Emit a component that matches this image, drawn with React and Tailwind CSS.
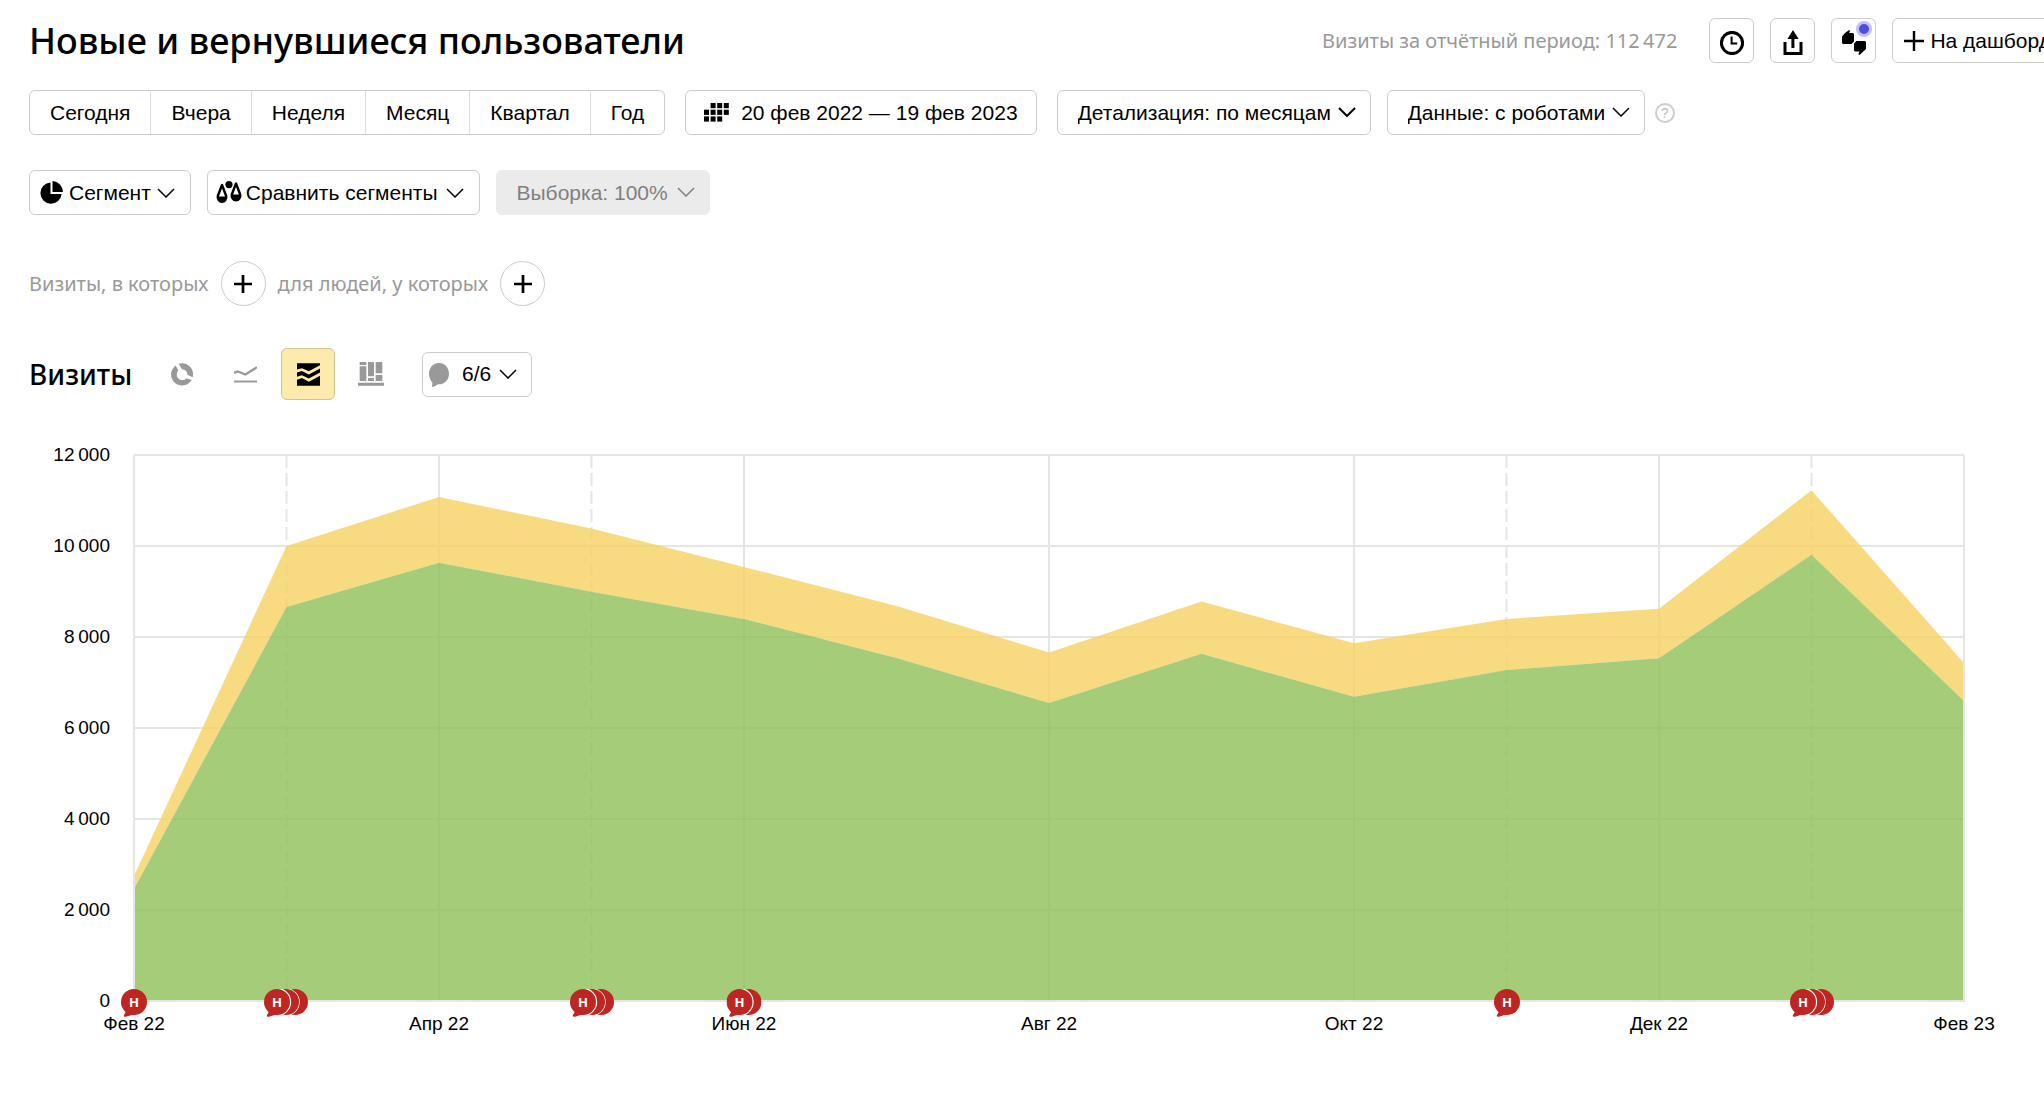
import React from "react";

const MONTHS = ["Фев 22", "", "Апр 22", "", "Июн 22", "", "Авг 22", "", "Окт 22", "", "Дек 22", "", "Фев 23"];
const TOTAL = [2747, 10000, 11077, 10382, 9538, 8681, 7659, 8778, 7862, 8396, 8620, 11224, 7427];
const NEW_USERS = [2461, 8659, 9633, 8993, 8396, 7538, 6549, 7631, 6686, 7275, 7532, 9809, 6593];
const Y_LABELS = ["12\u2009000", "10\u2009000", "8\u2009000", "6\u2009000", "4\u2009000", "2\u2009000", "0"];
const NOTES = [
  { month: 0, count: 1 },
  { month: 1, count: 3 },
  { month: 3, count: 3 },
  { month: 4, count: 2 },
  { month: 9, count: 1 },
  { month: 11, count: 3 },
];
const MAX = 12000;
const LAST = MONTHS.length - 1;

const point = (v, i) => `${i},${MAX - v}`;

function Chevron({ className = "", stroke = 1.5 }) {
  return (
    <svg viewBox="0 0 18 10" width="18" height="10" fill="none" stroke="currentColor" strokeWidth={stroke} className={className} aria-hidden="true">
      <path d="M1 1l8 8 8-8" />
    </svg>
  );
}

function Dropdown({ label, text, icon, pad = "pl-5 pr-[38px]", heavy = false, disabled = false }) {
  return (
    <div className={disabled ? "relative shrink-0 text-[#808080]" : "relative shrink-0 text-black"}>
      <select
        aria-label={label}
        disabled={disabled}
        className={
          "h-[45px] appearance-none rounded-md border text-[21px] leading-6 opacity-100 " +
          pad +
          (disabled ? " border-[#ebebeb] bg-[#ebebeb]" : " border-[#ccc] bg-white")
        }
      >
        <option>{text}</option>
      </select>
      {icon}
      <Chevron stroke={heavy ? 2 : 1.5} className="pointer-events-none absolute top-[17px] right-[15px]" />
    </div>
  );
}

function ClockIcon() {
  return (
    <svg viewBox="0 0 24 24" width="24" height="24" fill="none" stroke="currentColor" aria-hidden="true">
      <circle cx="12" cy="12" r="10.6" strokeWidth="3" />
      <path d="M11.6 5.5v7.1h5.6" strokeWidth="2" />
    </svg>
  );
}

function ShareIcon() {
  return (
    <svg viewBox="0 0 20 26" width="20" height="26" aria-hidden="true">
      <path d="M2 12v11.5h16V12" fill="none" stroke="currentColor" strokeWidth="3" />
      <path d="M10 0l5.6 9H11.4v9H8.4V9H4.4z" fill="currentColor" />
    </svg>
  );
}

function QuotesIcon() {
  return (
    <svg viewBox="0 0 24 25" width="24" height="25" fill="currentColor" aria-hidden="true">
      <path d="M7.2 0L8 .8 7.2 3H11l1 1v7.500l-2.500 2.500H1L0 13V6.500L3 3z" />
      <path d="M14.500 11H23l1 1v7l-6.500 6-1.100-.8L17.500 21.500H13L12 20.500V13.500z" />
    </svg>
  );
}

function PlusIcon({ size, thick }) {
  return (
    <svg viewBox="0 0 20 20" width={size} height={size} stroke="currentColor" strokeWidth={thick} aria-hidden="true">
      <path d="M10 0v20M0 10h20" />
    </svg>
  );
}

function CalendarIcon() {
  const cells = [[1, 0], [2, 0], [3, 0], [0, 1], [1, 1], [2, 1], [3, 1], [0, 2], [1, 2], [2, 2]];
  return (
    <svg viewBox="0 0 25 19" width="25" height="19" fill="currentColor" aria-hidden="true">
      {cells.map(([c, r]) => (
        <rect key={`${c}-${r}`} x={c * 6.6} y={r * 6.7} width="5" height="5.2" />
      ))}
    </svg>
  );
}

function PieIcon() {
  return (
    <svg viewBox="0 0 23 23" width="23" height="23" fill="currentColor" aria-hidden="true">
      <path d="M10.500 1.500A10.600 10.600 0 1 0 21.600 13H10.500z" />
      <path d="M12.500 0v11H23A11 11 0 0 0 12.500 0z" />
    </svg>
  );
}

function ScalesIcon() {
  return (
    <svg viewBox="0 0 26 23" width="26" height="23" aria-hidden="true">
      <circle cx="13" cy="3.600" r="3.600" fill="currentColor" />
      <path d="M6 4L1.800 15a4.300 4.800 0 1 0 8.400 0z" fill="none" stroke="currentColor" strokeWidth="2.400" strokeLinejoin="round" />
      <path d="M1 15.500h10a5 5 0 1 1-10 0z" fill="currentColor" />
      <path d="M20 2.500L15.800 13.500a4.300 4.800 0 1 0 8.400 0z" fill="none" stroke="currentColor" strokeWidth="2.400" strokeLinejoin="round" />
      <path d="M15 13.500h10a5 5 0 1 1-10 0z" fill="currentColor" />
    </svg>
  );
}

function DonutIcon() {
  return (
    <svg viewBox="0 0 66 68" width="22" height="23" fill="currentColor" aria-hidden="true">
      <path d="M23 2A33 33 0 0 1 65 42L49 35A16 16 0 0 0 33 18z" />
      <path d="M14 7L22 22A16 16 0 0 0 46 46L62 50A33 33 0 1 1 14 7z" />
    </svg>
  );
}

function LineIcon() {
  return (
    <svg viewBox="0 0 69 50" width="23" height="17" fill="none" stroke="currentColor" aria-hidden="true">
      <path d="M0 20l12-4 22 9L69 3" strokeWidth="7" />
      <path d="M0 46h69" strokeWidth="6" />
    </svg>
  );
}

function AreaIcon() {
  return (
    <svg viewBox="0 0 70 68" width="23" height="23" fill="currentColor" aria-hidden="true">
      <path d="M0 0H70V6L36 24L15 15L0 19z" />
      <path d="M0 28L15 23L36 34L70 16V28L36 46L15 36L0 41z" />
      <path d="M0 50L15 45L36 56L70 38V68H0z" />
    </svg>
  );
}

function ColumnsIcon() {
  return (
    <svg viewBox="0 0 78 72" width="26" height="24" fill="currentColor" aria-hidden="true">
      <path d="M5 0H25V9H5zM5 13H25V57H5zM30 0H48V43H30zM30 48H48V57H30zM53 0H73V34H53zM53 39H73V57H53zM0 62H78V71H0z" />
    </svg>
  );
}

function ChatIcon() {
  return (
    <svg viewBox="0 0 60 72" width="20" height="24" fill="#999" className="pointer-events-none absolute top-[11px] left-[7px]" aria-hidden="true">
      <path d="M30 0C47 0 60 14 60 32S47 64 30 64Q26 64 23 66Q16 72 8 72Q11 66 10 58Q0 47 0 32C0 14 13 0 30 0z" />
    </svg>
  );
}

function NoteMarker({ month, count }) {
  const width = 26 + (count - 1) * 9;
  const extra = Array.from({ length: count - 1 }, (_, i) => count - 1 - i);
  return (
    <button
      type="button"
      aria-label={`Примечания: ${count}`}
      className="absolute top-full -mt-3 -translate-x-1/2"
      style={{ left: `${(month / LAST) * 100}%` }}
    >
      <svg viewBox={`0 0 ${width} 28`} width={width} height="28" className="block">
        {extra.map((n) => (
          <g key={n}>
            <circle cx={13 + n * 9} cy="13" r="13" fill="#bd2622" />
            <path d={`M${15 + (n - 1) * 9} 0a13.500 13.200 0 0 1 0 26`} fill="none" stroke="#fff" strokeWidth={n === 1 ? 2 : 1.2} />
          </g>
        ))}
        <circle cx="13" cy="13" r="13" fill="#bd2622" />
        <path d="M6 20Q5 23 3 26Q2 28 5 27.800Q10 27 14 24z" fill="#bd2622" />
        <text x="13" y="18" textAnchor="middle" fill="#fff" fontSize="13" fontWeight="700" fontFamily="Noto Sans, sans-serif">Н</text>
      </svg>
    </button>
  );
}

function VisitsChart() {
  const newLine = NEW_USERS.map(point);
  const totalLine = TOTAL.map(point);
  const dashed = [1, 3, 9, 11];
  return (
    <div className="mr-20 flex items-start pl-4">
      <div className="-mt-3 flex h-[570px] w-[65px] flex-col justify-between text-right text-[19px] leading-6">
        {Y_LABELS.map((t) => (
          <span key={t}>{t}</span>
        ))}
      </div>
      <div className="ml-6 min-w-0 flex-1">
        <div className="relative h-[546px]">
          <svg viewBox={`0 0 ${LAST} ${MAX}`} preserveAspectRatio="none" className="block h-full w-full overflow-visible" role="img" aria-label="Визиты по месяцам">
            <g stroke="#e5e5e5" strokeWidth="2" fill="none">
              {[0, 2000, 4000, 6000, 8000, 10000, 12000].map((v) => (
                <path key={v} d={`M0 ${v}H${LAST}`} vectorEffect="non-scaling-stroke" />
              ))}
              {[0, 2, 4, 6, 8, 10, 12].map((m) => (
                <path key={m} d={`M${m} 0V${MAX}`} vectorEffect="non-scaling-stroke" />
              ))}
              {dashed.map((m) => (
                <path key={m} d={`M${m} 0V${MAX}`} strokeDasharray="13 5" vectorEffect="non-scaling-stroke" />
              ))}
            </g>
            <polygon points={[...totalLine, ...[...newLine].reverse()].join(" ")} fill="#f6d162" fillOpacity="0.8" />
            <polygon points={[`0,${MAX}`, ...newLine, `${LAST},${MAX}`].join(" ")} fill="#8fbf56" fillOpacity="0.8" />
            <path d={`M0 0V${MAX}H${LAST}V0`} fill="none" stroke="#e5e5e5" strokeWidth="2" vectorEffect="non-scaling-stroke" />
          </svg>
          {NOTES.map((n) => (
            <NoteMarker key={n.month} {...n} />
          ))}
        </div>
        <div className="mt-[11px] flex justify-between text-[19px] leading-6">
          {MONTHS.map((m, i) => (
            <span key={i} className="flex w-0 justify-center whitespace-nowrap">{m}</span>
          ))}
        </div>
      </div>
    </div>
  );
}

const iconButton = "relative flex h-[45px] w-[45px] shrink-0 items-center justify-center rounded-md border border-[#ccc] pt-1";
const textButton = "flex h-[45px] shrink-0 items-center rounded-md border border-[#ccc] bg-white text-[21px] leading-6 whitespace-nowrap";

export default function App() {
  return (
    <main className="min-h-screen overflow-hidden bg-white pt-[18px] pl-[29px] font-['Liberation_Sans',Arial,sans-serif] text-black">
      <header className="-mr-7 flex h-[45px] items-center justify-between">
        <h1 className="font-['Noto_Sans',sans-serif] text-4xl leading-[48px] font-medium whitespace-nowrap">Новые и вернувшиеся пользователи</h1>
        <div className="flex shrink-0 items-center gap-4">
          <p className="mr-4 font-['Noto_Sans',sans-serif] text-xl leading-6 whitespace-nowrap text-[#999]">
            Визиты за отчётный период: 112&#8201;472
          </p>
          <button type="button" aria-label="История" className={iconButton}><ClockIcon /></button>
          <button type="button" aria-label="Экспорт" className={iconButton}><ShareIcon /></button>
          <button type="button" aria-label="Отзывы" className={iconButton}>
            <QuotesIcon />
            <span className="absolute top-[2px] right-[3px] h-4 w-4 rounded-full border-[3px] border-[#c3c0f9] bg-[#524edb]" />
          </button>
          <button type="button" className={textButton + " gap-1.5 pr-5 pl-[11px]"}>
            <PlusIcon size={20} thick={2.4} />
            На дашборд
          </button>
        </div>
      </header>

      <div className="mt-[27px] flex items-center">
        <div className="flex shrink-0 divide-x divide-[#ddd] overflow-hidden rounded-md border border-[#ccc] text-[21px] leading-6">
          {["Сегодня", "Вчера", "Неделя", "Месяц", "Квартал", "Год"].map((p) => (
            <button key={p} type="button" className="h-[43px] px-5">{p}</button>
          ))}
        </div>
        <button type="button" className={textButton + " ml-5 gap-3 px-[18px]"}>
          <CalendarIcon />
          20 фев 2022 — 19 фев 2023
        </button>
        <div className="ml-5 flex items-center gap-4">
          <Dropdown label="Детализация" text="Детализация: по месяцам" heavy />
          <Dropdown label="Данные" text="Данные: с роботами" />
        </div>
        <button type="button" aria-label="Справка" className="ml-2.5 flex h-5 w-5 items-center justify-center rounded-full border-2 border-[#ccc] text-sm leading-4 text-[#bbb]">?</button>
      </div>

      <div className="mt-[35px] flex items-center gap-4">
        <button type="button" className={textButton + " gap-1.5 pr-[15px] pl-[10px]"}>
          <PieIcon />
          Сегмент
          <Chevron />
        </button>
        <button type="button" className={textButton + " gap-1 pr-[15px] pl-2"}>
          <ScalesIcon />
          Сравнить сегменты
          <Chevron className="ml-1" />
        </button>
        <Dropdown label="Выборка" text="Выборка: 100%" pad="pl-5 pr-10" disabled />
      </div>

      <div className="mt-[46px] flex items-center font-['Noto_Sans',sans-serif] text-xl leading-6 text-[#999]">
        <span>Визиты, в которых</span>
        <button type="button" aria-label="Добавить условие для визитов" className="mx-3 flex h-[45px] w-[45px] items-center justify-center rounded-full border border-[#ccc] text-black">
          <PlusIcon size={18} thick={3} />
        </button>
        <span>для людей, у которых</span>
        <button type="button" aria-label="Добавить условие для людей" className="mx-3 flex h-[45px] w-[45px] items-center justify-center rounded-full border border-[#ccc] text-black">
          <PlusIcon size={18} thick={3} />
        </button>
      </div>

      <div className="mt-[42px] flex items-center">
        <h2 className="w-[126px] font-['Noto_Sans',sans-serif] text-[28px] leading-9 font-medium">Визиты</h2>
        <div className="flex items-center gap-[9px] text-[#999]">
          <button type="button" aria-label="Круговая диаграмма" className="flex h-[52px] w-[54px] items-center justify-center"><DonutIcon /></button>
          <button type="button" aria-label="Линии" className="flex h-[52px] w-[54px] items-center justify-center"><LineIcon /></button>
          <button type="button" aria-label="Области" aria-pressed="true" className="flex h-[52px] w-[54px] items-center justify-center rounded-md border border-[#cfc38f] bg-[#fdebad] text-black"><AreaIcon /></button>
          <button type="button" aria-label="Столбцы" className="flex h-[52px] w-[54px] items-center justify-center"><ColumnsIcon /></button>
        </div>
        <div className="ml-6">
          <Dropdown label="Примечания" text="6/6" pad="pl-[39px] pr-[39px]" icon={<ChatIcon />} />
        </div>
      </div>

      <section className="mt-[55px]">
        <VisitsChart />
      </section>
    </main>
  );
}
